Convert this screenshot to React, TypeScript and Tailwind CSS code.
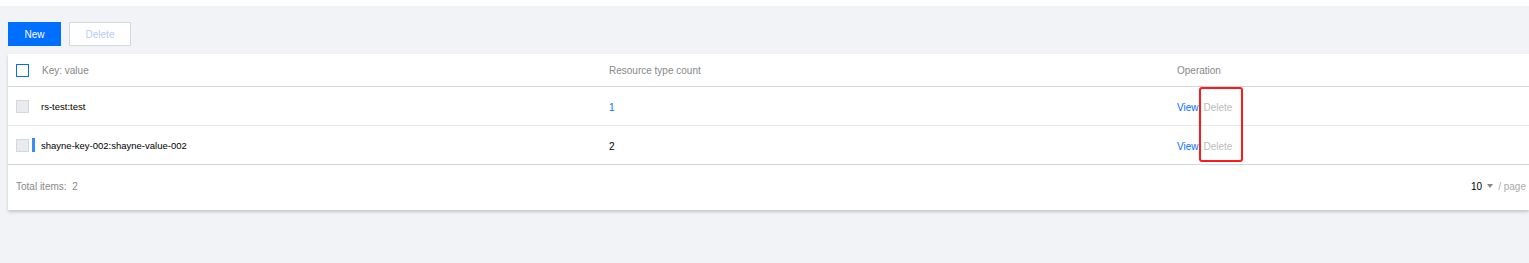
const rows = [
  { key: 'rs-test:test', count: '1', link: true, bar: false },
  { key: 'shayne-key-002:shayne-value-002', count: '2', link: false, bar: true },
];

function Checkbox({ head }: { head?: boolean }) {
  return head ? (
    <span className="block w-[13px] h-[13px] border border-[#006eff] bg-white" />
  ) : (
    <span className="block w-[13px] h-[13px] border border-[#d4d8de] bg-[#e8ebf0]" />
  );
}

export default function App() {
  return (
    <div
      className="w-[1529px] h-[263px] overflow-hidden bg-[#f2f3f7] text-[10px] text-[#000]"
      style={{ fontFamily: '"Liberation Sans", Arial, sans-serif' }}
    >
      <div className="h-[6px] bg-white" />
      <div className="pl-2 pt-4">
        <div className="flex gap-2">
          <button className="w-[53px] h-6 pt-px bg-[#006eff] text-white">New</button>
          <button className="w-[62px] h-6 pt-px bg-white border border-[#d3d8df] text-[#b7cdf5]">Delete</button>
        </div>
        <div className="relative mt-2 bg-white shadow-[0_2px_3px_0_rgba(0,0,0,0.18)]">
          <div className="grid grid-cols-[601px_568px_1fr] h-[33px] items-center border-b border-[#d0d5de] text-[#888]">
            <div className="flex items-center pl-2">
              <Checkbox head />
              <span className="ml-[13px] pt-px">Key: value</span>
            </div>
            <div className="pt-px">Resource type count</div>
            <div className="pt-px">Operation</div>
          </div>
          {rows.map((r, i) => (
            <div
              key={r.key}
              className={`grid grid-cols-[601px_568px_1fr] h-[39px] items-center ${
                i === rows.length - 1 ? 'border-b border-[#d0d5de]' : 'border-b border-[#e6e8eb]'
              }`}
            >
              <div className="flex items-center pl-2">
                <Checkbox />
                {r.bar ? (
                  <span className="ml-[3px] mr-[6px] w-[3px] h-[14px] bg-[#3a8cf8]" />
                ) : (
                  <span className="ml-[3px] mr-[6px] w-[3px] h-[14px]" />
                )}
                <span className="pt-[3px] text-[9.5px]">{r.key}</span>
              </div>
              <div className={r.link ? 'pt-[3px] text-[#006eff]' : 'pt-[3px]'}>{r.count}</div>
              <div className="flex gap-[5px] pt-[3px]">
                <span className="text-[#006eff]">View</span>
                <span className="text-[#bbb]">Delete</span>
              </div>
            </div>
          ))}
          <div className="flex items-center justify-between h-[45px] pb-[3px] pl-2 pr-[3px] text-[#888]">
            <span>Total items:&nbsp; 2</span>
            <div className="flex items-center">
              <span className="text-[#000]">10</span>
              <svg className="ml-[5px]" width="6" height="4" viewBox="0 0 6 4">
                <path d="M0 0h6L3 4z" fill="#888" />
              </svg>
              <span className="ml-[5px] text-[#aaa]">/ page</span>
            </div>
          </div>
          <div className="absolute left-[1191px] top-[33px] w-[44px] h-[75px] border-[2.5px] border-[#ff1a1a] rounded-[3px]" />
        </div>
      </div>
    </div>
  );
}
